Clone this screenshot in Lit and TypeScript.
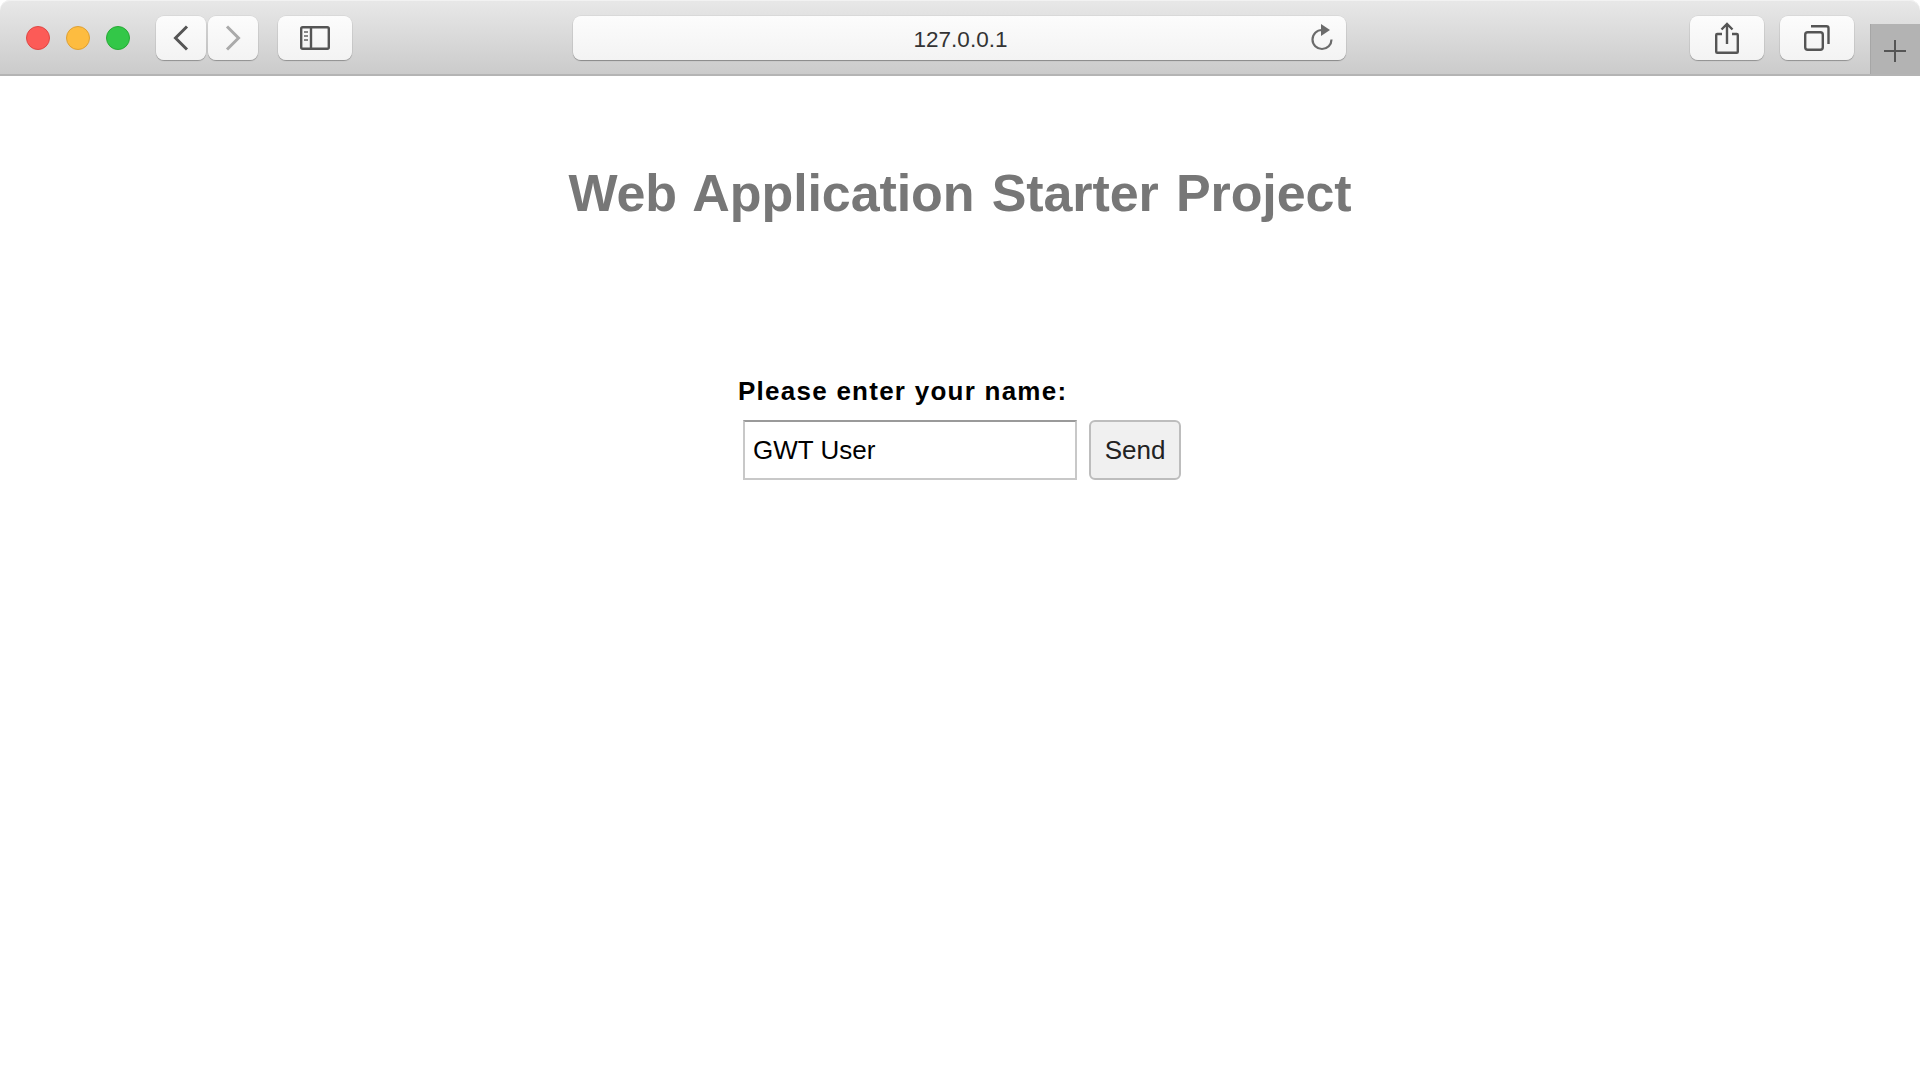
import { LitElement, html, css } from "lit";
import { customElement } from "lit/decorators.js";

@customElement("app-root")
export class AppRoot extends LitElement {
  static styles = css`
    :host {
      display: block;
      width: 1920px;
      height: 1080px;
      overflow: hidden;
      background: #fff;
      font-family: "Liberation Sans", Arial, sans-serif;
    }

    .toolbar {
      display: flex;
      align-items: flex-start;
      box-sizing: border-box;
      height: 76px;
      padding-top: 16px;
      padding-left: 26px;
      border-bottom: 2px solid #b4b4b4;
      border-radius: 10px 10px 0 0;
      background: linear-gradient(#e8e8e8, #cbcbcb);
      box-shadow: inset 0 1px 0 #f2f2f2;
    }

    .lights {
      display: flex;
      gap: 16px;
      margin-top: 10px;
      margin-right: 26px;
    }

    .light {
      width: 24px;
      height: 24px;
      box-sizing: border-box;
      border-radius: 50%;
      border: 1px solid;
    }
    .red { background: #fc5b57; border-color: #df4744; }
    .yellow { background: #fdbc40; border-color: #dea034; }
    .green { background: #33c748; border-color: #27aa35; }

    .btn {
      display: flex;
      align-items: center;
      justify-content: center;
      box-sizing: border-box;
      height: 44px;
      width: 74px;
      border-radius: 8px;
      background: linear-gradient(#fcfcfc, #f3f3f3);
      box-shadow: 0 1px 1px rgba(0, 0, 0, 0.28), 0 0 0 0.5px rgba(0, 0, 0, 0.08);
    }
    .btn svg { display: block; fill: none; stroke: #555; stroke-width: 2.4; }
    .btn.nav { width: 50px; }
    .btn.nav svg { stroke-width: 3; }
    .forward { margin-left: 2px; }
    .forward svg { stroke: #aaa; }
    .sidebar { margin-left: 20px; }
    .tabs { margin-left: 16px; }

    .url {
      display: flex;
      align-items: center;
      justify-content: center;
      position: relative;
      box-sizing: border-box;
      width: 773px;
      height: 44px;
      padding-top: 4px;
      padding-left: 2px;
      margin-left: 221px;
      margin-right: 344px;
      border-radius: 8px;
      background: linear-gradient(#fcfcfc, #f3f3f3);
      box-shadow: 0 1px 1px rgba(0, 0, 0, 0.32), 0 0 0 0.5px rgba(0, 0, 0, 0.08);
      color: #333;
      font-size: 22.5px;
    }
    .reload {
      position: absolute;
      right: 12px;
      top: 6px;
      fill: none;
      stroke: #6b6b6b;
      stroke-width: 2.2;
    }

    .newtab {
      display: flex;
      align-items: center;
      justify-content: center;
      box-sizing: border-box;
      width: 50px;
      height: 50px;
      padding-top: 4px;
      padding-right: 2px;
      margin-top: 8px;
      margin-left: 16px;
      background: #b3b3b3;
      border-left: 1px solid #a6a6a6;
    }
    .newtab svg { stroke: #555; stroke-width: 2; fill: none; }

    main {
      display: flex;
      flex-direction: column;
      align-items: center;
    }

    h1 {
      margin: 85px 0 0;
      font-size: 52px;
      line-height: 64px;
      font-weight: bold;
      letter-spacing: -0.1px;
      word-spacing: 3px;
      color: #777;
      text-align: center;
    }

    .form {
      display: flex;
      flex-direction: column;
      width: 444px;
      margin-top: 151px;
    }

    label {
      font-size: 26px;
      line-height: 30px;
      font-weight: bold;
      letter-spacing: 1.25px;
      color: #000;
    }

    .row {
      display: flex;
      gap: 12px;
      margin-top: 14px;
      padding-left: 5px;
    }

    input {
      box-sizing: border-box;
      width: 334px;
      height: 60px;
      padding: 1px 8px 0;
      border: 2px solid #c8c8c8;
      border-top-color: #9a9a9a;
      outline: none;
      font: 26px "Liberation Sans", Arial, sans-serif;
      color: #000;
    }

    button {
      box-sizing: border-box;
      width: 92px;
      height: 60px;
      padding: 1px 0 0;
      border: 2px solid #bdbdbd;
      border-radius: 6px;
      background: #f0f0f0;
      font: 26px "Liberation Sans", Arial, sans-serif;
      color: #222;
    }
  `;

  render() {
    return html`
      <div class="toolbar">
        <div class="lights">
          <div class="light red"></div>
          <div class="light yellow"></div>
          <div class="light green"></div>
        </div>
        <div class="btn nav">
          <svg width="16" height="26" viewBox="0 0 16 26"><path d="M14 1.5 2.5 13 14 24.5" /></svg>
        </div>
        <div class="btn nav forward">
          <svg width="16" height="26" viewBox="0 0 16 26"><path d="M2 1.5 13.5 13 2 24.5" /></svg>
        </div>
        <div class="btn sidebar">
          <svg width="30" height="24" viewBox="0 0 30 24">
            <rect x="1.2" y="1.2" width="27.6" height="21.6" rx="1.5" />
            <path d="M11 1v22" />
            <path d="M4 6h4M4 10h4M4 14h4" stroke="#888" stroke-width="2" />
          </svg>
        </div>
        <div class="url">
          127.0.0.1
          <svg class="reload" width="24" height="30" viewBox="0 0 24 30">
            <path d="M12 8a9.5 9.5 0 1 0 9.5 9.5" />
            <path d="M11 2l9 6-9 6z" fill="#6b6b6b" stroke="none" />
          </svg>
        </div>
        <div class="btn">
          <svg width="24" height="32" viewBox="0 0 24 32">
            <path d="M7 12H2.2a1 1 0 0 0-1 1v16.8a1 1 0 0 0 1 1h19.6a1 1 0 0 0 1-1V13a1 1 0 0 0-1-1H17" />
            <path d="M12 22V2M6.5 7.5 12 2l5.5 5.5" />
          </svg>
        </div>
        <div class="btn tabs">
          <svg width="26" height="26" viewBox="0 0 26 26">
            <rect x="1.2" y="7.2" width="17.6" height="17.6" rx="2.5" />
            <path d="M7 1.2h15.5a2 2 0 0 1 2 2V19" />
          </svg>
        </div>
        <div class="newtab">
          <svg width="22" height="22" viewBox="0 0 22 22"><path d="M11 0v22M0 11h22" /></svg>
        </div>
      </div>
      <main>
        <h1>Web Application Starter Project</h1>
        <div class="form">
          <label>Please enter your name:</label>
          <div class="row">
            <input .value=${"GWT User"} />
            <button>Send</button>
          </div>
        </div>
      </main>
    `;
  }
}
